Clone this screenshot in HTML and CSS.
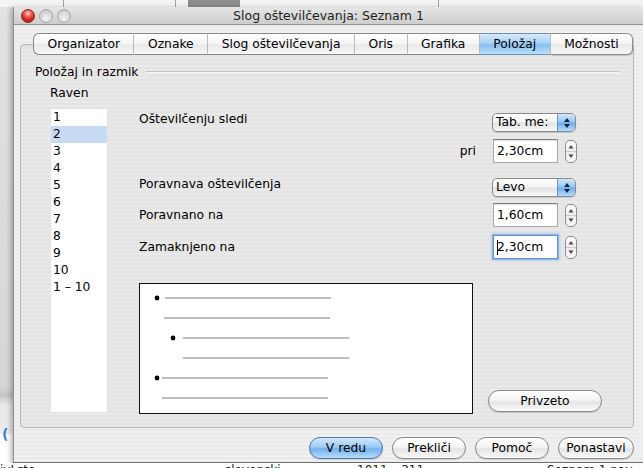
FILE: index.html
```html
<!DOCTYPE html>
<html lang="sl">
<head>
<meta charset="utf-8">
<title>Slog oštevilčevanja: Seznam 1</title>
<link rel="stylesheet" href="styles.css">
</head>
<body>
<div class="screen">
  <div class="bg-top"></div>
  <div class="middle">
    <div class="bg-left"><span class="bg-icon">(</span></div>
    <div class="dialog">
      <div class="titlebar">
        <div class="lights"><span class="light red"></span><span class="light"></span><span class="light"></span></div>
        <div class="title">Slog oštevilčevanja: Seznam 1</div>
        <div></div>
      </div>
      <div class="dlg-body">
        <div class="tabs">
          <span class="tab first">Organizator</span>
          <span class="tab">Oznake</span>
          <span class="tab">Slog oštevilčevanja</span>
          <span class="tab">Oris</span>
          <span class="tab">Grafika</span>
          <span class="tab active">Položaj</span>
          <span class="tab last">Možnosti</span>
        </div>
        <div class="panel">
          <div class="group-head"><span class="group-title">Položaj in razmik</span><span class="rule"></span></div>
          <div class="group-body">
            <div class="levels">
              <div class="lbl">Raven</div>
              <ul class="list">
                <li>1</li><li class="sel">2</li><li>3</li><li>4</li><li>5</li><li>6</li><li>7</li><li>8</li><li>9</li><li>10</li><li>1 – 10</li>
              </ul>
            </div>
            <div class="settings">
              <div class="row r-popup">
                <span class="label up">Oštevilčenju sledi</span>
                <div class="ctl">
                  <div class="popup"><span class="popup-text">Tab. me:</span><span class="popup-arrows"><svg width="8" height="12" viewBox="0 0 8 12"><path d="M4 1 L7 5 L1 5 Z M4 11 L7 7 L1 7 Z" fill="#15233d"/></svg></span></div>
                </div>
              </div>
              <div class="row r-field m7">
                <span class="label right">pri</span>
                <div class="ctl">
                  <div class="field">2,30cm</div>
                  <div class="stepper"><svg width="12" height="23" viewBox="0 0 12 23"><path d="M6 5 L8.5 8.5 L3.5 8.5 Z M6 18 L8.5 14.5 L3.5 14.5 Z" fill="#4a4a4a"/><path d="M1 11.5 H11" stroke="#c8c8c8" stroke-width="1"/></svg></div>
                </div>
              </div>
              <div class="row r-popup m15">
                <span class="label up">Poravnava oštevilčenja</span>
                <div class="ctl">
                  <div class="popup"><span class="popup-text">Levo</span><span class="popup-arrows"><svg width="8" height="12" viewBox="0 0 8 12"><path d="M4 1 L7 5 L1 5 Z M4 11 L7 7 L1 7 Z" fill="#15233d"/></svg></span></div>
                </div>
              </div>
              <div class="row r-field m6">
                <span class="label">Poravnano na</span>
                <div class="ctl">
                  <div class="field">1,60cm</div>
                  <div class="stepper"><svg width="12" height="23" viewBox="0 0 12 23"><path d="M6 5 L8.5 8.5 L3.5 8.5 Z M6 18 L8.5 14.5 L3.5 14.5 Z" fill="#4a4a4a"/><path d="M1 11.5 H11" stroke="#c8c8c8" stroke-width="1"/></svg></div>
                </div>
              </div>
              <div class="row r-field m8">
                <span class="label">Zamaknjeno na</span>
                <div class="ctl">
                  <div class="field focus"><span class="caret"></span>2,30cm</div>
                  <div class="stepper"><svg width="12" height="23" viewBox="0 0 12 23"><path d="M6 5 L8.5 8.5 L3.5 8.5 Z M6 18 L8.5 14.5 L3.5 14.5 Z" fill="#4a4a4a"/><path d="M1 11.5 H11" stroke="#c8c8c8" stroke-width="1"/></svg></div>
                </div>
              </div>
              <div class="bottom-row">
                <div class="preview">
                  <svg width="332" height="129" viewBox="0 0 332 129">
                    <g stroke="#bdbdbd" stroke-width="2">
                      <path d="M25 14 H191"/>
                      <path d="M24 34 H190"/>
                      <path d="M43 54 H209"/>
                      <path d="M43 74 H209"/>
                      <path d="M22 94 H188"/>
                      <path d="M22 114 H188"/>
                    </g>
                    <g fill="#000">
                      <circle cx="17" cy="14" r="2.4"/>
                      <circle cx="33" cy="54" r="2.4"/>
                      <circle cx="17" cy="94" r="2.4"/>
                    </g>
                  </svg>
                </div>
                <span class="btn privzeto">Privzeto</span>
              </div>
            </div>
          </div>
        </div>
        <div class="buttons">
          <span class="btn default">V redu</span>
          <span class="btn">Prekliči</span>
          <span class="btn">Pomoč</span>
          <span class="btn wide">Ponastavi</span>
        </div>
      </div>
    </div>
  </div>
  <div class="bg-bottom">
    <span class="bt t1">ivLsto</span>
    <span class="bt t2">slovenski</span>
    <span class="bt t3">1011 – 311</span>
    <span class="bt t4">Seznam 1 nav</span>
  </div>
</div>
</body>
</html>
```
FILE: styles.css
```css
* { box-sizing: border-box; }
html, body { margin: 0; padding: 0; }
body {
  width: 643px;
  height: 468px;
  overflow: hidden;
  background: #ffffff;
  font-family: "DejaVu Sans", "Liberation Sans", sans-serif;
  font-size: 12.3px;
  color: #000;
}
.screen { width: 643px; height: 468px; display: flex; flex-direction: column; }

/* background application */
.bg-top {
  height: 7px;
  flex: none;
  background: linear-gradient(to right, #f4f4f4 63px, #a3a3a3 63px 64px, #f4f4f4 64px 175px, #a3a3a3 175px 176px, #f4f4f4 176px 188px, #8d8d8d 188px 240px, #f4f4f4 240px 438px, #a3a3a3 438px 439px, #f4f4f4 439px);
}
.middle { display: flex; height: 456px; flex: none; }
.bg-left {
  width: 13px;
  flex: none;
  display: flex;
  align-items: flex-end;
  padding-bottom: 22px;
  overflow: hidden;
  background: linear-gradient(to bottom, #e2e2e2 0, #d6d6d6 380px, #c4c4c4 388px, #e8e8e8 398px, #ececec 426px, #ffffff 428px);
}
.bg-icon { color: #3b7fd0; font-size: 14px; line-height: 14px; margin-left: 2px; font-weight: bold; }
.bg-bottom {
  height: 5px;
  flex: none;
  display: flex;
  overflow: hidden;
  background: #fff;
  font-size: 12px;
  line-height: 14px;
  color: #222;
}
.bt { flex: none; }
.t1 { width: 225px; }
.t2 { width: 132px; }
.t3 { width: 190px; }

/* dialog window */
.dialog {
  width: 630px;
  flex: none;
  display: flex;
  flex-direction: column;
  border-left: 1px solid #8e8e8e;
  border-bottom: 1px solid #6e6e6e;
  box-shadow: -2px 1px 5px rgba(0, 0, 0, 0.3);
  background: repeating-linear-gradient(to bottom, #f0f0f0 0 2px, #ebebeb 2px 4px);
}
.titlebar {
  height: 18px;
  flex: none;
  display: grid;
  grid-template-columns: 1fr auto 1fr;
  align-items: center;
  background: linear-gradient(to bottom, #e6e6e6, #cdcdcd);
  border-bottom: 1px solid #939393;
  font-size: 12.5px;
  color: #1e1e1e;
}
.lights { display: flex; gap: 4px; margin-left: 7px; }
.light {
  width: 14px;
  height: 14px;
  border-radius: 50%;
  border: 1px solid #a7a7a7;
  background: radial-gradient(circle at 50% 70%, #f4f4f4 0, #d4d4d4 60%, #bdbdbd 100%);
}
.light.red {
  border-color: #90231c;
  background: radial-gradient(circle at 50% 28%, #ffd2cc 0, #f2695f 28%, #d22a20 60%, #a8140e 100%);
}
.title { white-space: nowrap; }

.dlg-body { flex: 1; display: flex; flex-direction: column; padding-top: 8px; }

/* tabs */
.tabs { display: flex; margin-left: 19px; height: 22px; position: relative; z-index: 1; align-self: flex-start; }
.tab {
  height: 22px;
  line-height: 20px;
  padding: 0 13.5px;
  border-top: 1px solid #8a8a8a;
  border-bottom: 1px solid #8a8a8a;
  border-right: 1px solid #bcbcbc;
  background: linear-gradient(to bottom, #ffffff 0, #f6f6f6 45%, #e9e9e9 55%, #f7f7f7 100%);
  white-space: nowrap;
}
.tab.first { border-left: 1px solid #8a8a8a; border-radius: 6px 0 0 6px; }
.tab.last { border-right: 1px solid #8a8a8a; border-radius: 0 6px 6px 0; box-shadow: 1px 1px 1px rgba(0,0,0,0.15); }
.tab.active {
  background: linear-gradient(to bottom, #d6eafc 0, #a8d1f6 45%, #86bff0 55%, #bfe0fb 100%);
  border-top-color: #6f8fb5;
  border-bottom-color: #6f8fb5;
}

/* tab panel */
.panel {
  margin: -11px 0 0 6px;
  width: 614px;
  height: 384px;
  flex: none;
  border: 1px solid #b9b9b9;
  border-radius: 4px;
  padding-top: 20px;
  background: repeating-linear-gradient(to bottom, #e9e9e9 0 2px, #e4e4e4 2px 4px);
  box-shadow: inset 0 1px 2px rgba(0,0,0,0.08);
}
.group-head { display: flex; align-items: center; height: 14px; line-height: 14px; margin-left: 14px; }
.rule { flex: 1; height: 2px; margin: 0 14px 0 8px; border-top: 1px solid #c4c4c4; border-bottom: 1px solid #f7f7f7; }
.group-body { display: flex; margin-top: 7px; padding-left: 29px; }

.levels { width: 58px; flex: none; }
.lbl { height: 14px; line-height: 14px; }
.list {
  list-style: none;
  margin: 8px 0 0;
  padding: 0;
  height: 305px;
  background: #fff;
  border: 1px solid #e4e4e4;
}
.list li { height: 17px; line-height: 17px; padding-left: 2px; white-space: nowrap; }
.list li.sel { background: #c7dcf3; }

.settings { margin-left: 31px; padding-top: 27px; display: flex; flex-direction: column; }
.row { display: flex; align-items: center; }
.r-popup { height: 19px; }
.r-field { height: 24px; }
.m6 { margin-top: 6px; }
.m7 { margin-top: 7px; }
.m8 { margin-top: 8px; }
.m15 { margin-top: 15px; }
.label { width: 352px; flex: none; line-height: 14px; white-space: nowrap; }
.label.up { margin-bottom: 8px; }
.label.right { text-align: right; padding-right: 15px; }
.ctl { display: flex; align-items: center; }

.popup {
  margin-left: 1px;
  width: 84px;
  height: 19px;
  display: flex;
  border: 1px solid #8b8b8b;
  border-radius: 5px;
  overflow: hidden;
  background: linear-gradient(to bottom, #ffffff 0, #f3f3f3 45%, #e3e3e3 55%, #f7f7f7 100%);
  box-shadow: 0 1px 1px rgba(0,0,0,0.15);
}
.popup-text { flex: 1; padding-left: 3px; line-height: 17px; white-space: nowrap; overflow: hidden; }
.popup-arrows {
  width: 18px;
  flex: none;
  display: flex;
  align-items: center;
  justify-content: center;
  border-left: 1px solid #7392b8;
  background: linear-gradient(to bottom, #d2e7fb 0, #98c8f3 45%, #6fb0ee 55%, #b4dafb 100%);
}

.field {
  margin-left: 2px;
  width: 65px;
  height: 24px;
  line-height: 22px;
  padding-left: 3px;
  background: #fff;
  border: 1px solid #a9a9a9;
  border-top-color: #7d7d7d;
  box-shadow: inset 0 1px 1px rgba(0,0,0,0.12);
  white-space: nowrap;
  display: flex;
  align-items: center;
}
.field.focus {
  border-color: #6a8fc2;
  box-shadow: 0 0 0 1px #8fb5e6, 0 0 2px 2px #b3d0f2;
}
.caret { width: 1px; height: 15px; background: #000; margin-right: -1px; flex: none; }
.stepper {
  margin-left: 7px;
  width: 12px;
  height: 23px;
  border: 1px solid #8f8f8f;
  border-radius: 5px;
  overflow: hidden;
  background: linear-gradient(to bottom, #ffffff, #ececec 50%, #f9f9f9);
  display: flex;
}
.stepper svg { margin: -1px; }

.bottom-row { display: flex; align-items: flex-end; margin-top: 24px; }
.preview {
  width: 334px;
  height: 131px;
  flex: none;
  background: #fff;
  border: 1px solid #111;
}
.preview svg { display: block; }

.btn {
  height: 22px;
  width: 74px;
  flex: none;
  display: flex;
  align-items: center;
  justify-content: center;
  border: 1px solid #8a8a8a;
  border-radius: 11px;
  background: linear-gradient(to bottom, #ffffff 0, #f5f5f5 45%, #e4e4e4 55%, #fafafa 100%);
  box-shadow: 0 1px 1px rgba(0,0,0,0.15);
  white-space: nowrap;
}
.btn.privzeto { width: 114px; margin-left: 15px; margin-bottom: 2px; }
.btn.default {
  border-color: #4f78aa;
  background: linear-gradient(to bottom, #d4e8fc 0, #9ccaf4 45%, #72b1ee 55%, #b8dcfb 100%);
}
.btn.wide { width: 76px; }
.buttons { display: flex; justify-content: flex-end; gap: 9px; margin-top: 9px; padding-right: 9px; }
```
